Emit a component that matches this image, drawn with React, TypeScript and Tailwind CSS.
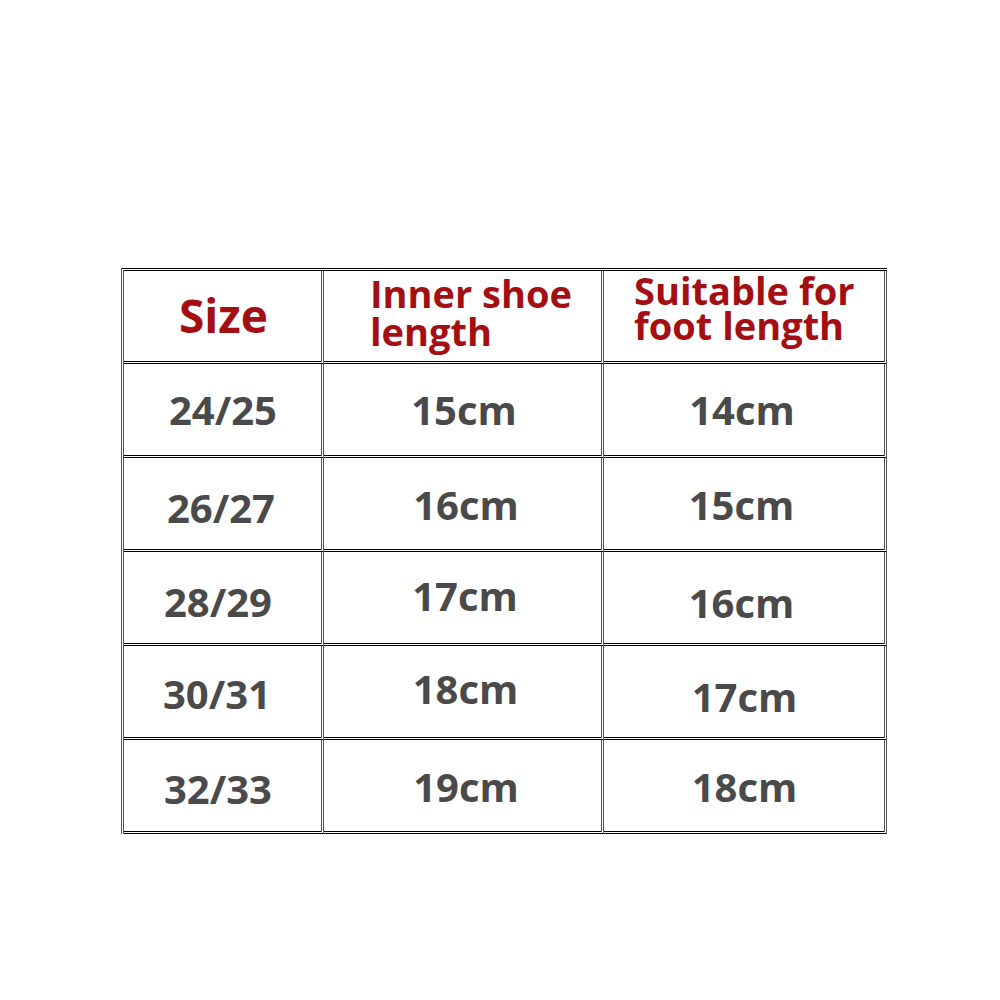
const rows = [
  {
    cells: [
      { text: "24/25", cls: "pl-[1px] pt-[0px]" },
      { text: "15cm", cls: "pl-[3px] pt-[0px]" },
      { text: "14cm", cls: "pr-[4px] pt-[0px]" },
    ],
  },
  {
    cells: [
      { text: "26/27", cls: "pr-[3px] pt-[8px]" },
      { text: "16cm", cls: "pl-[7px] pt-[2px]" },
      { text: "15cm", cls: "pr-[5px] pt-[2px]" },
    ],
  },
  {
    cells: [
      { text: "28/29", cls: "pr-[9px] pt-[8px]" },
      { text: "17cm", cls: "pl-[5px] pb-[4px]" },
      { text: "16cm", cls: "pr-[5px] pt-[10px]" },
    ],
  },
  {
    cells: [
      { text: "30/31", cls: "pr-[11px] pt-[4px]" },
      { text: "18cm", cls: "pl-[6px] pb-[6px]" },
      { text: "17cm", cls: "pl-[1px] pt-[10px]" },
    ],
  },
  {
    cells: [
      { text: "32/33", cls: "pr-[9px] pt-[6px]" },
      { text: "19cm", cls: "pl-[7px] pt-[2px]" },
      { text: "18cm", cls: "pl-[1px] pt-[2px]" },
    ],
  },
];

export default function App() {
  return (
    <div
      className="w-[1000px] h-[1000px] bg-white pt-[268px] pl-[121px]"
      style={{ fontFamily: '"Open Sans", "Noto Sans", sans-serif' }}
    >
      <div className="grid grid-cols-[200px_280px_283px] w-[766px] border-t-[3px] border-l-[3px] border-double border-t-black border-l-[#555]">
        {/* Header */}
        <div className="h-[93px] flex items-center justify-center border-b-[3px] border-r-[3px] border-double border-b-black border-r-[#555]">
          <span className="text-[46px] font-bold text-[#a30f13] leading-none pl-[2px] pb-[2px]">
            Size
          </span>
        </div>
        <div className="h-[93px] pl-[46px] pt-[3px] border-b-[3px] border-r-[3px] border-double border-b-black border-r-[#555]">
          <div className="text-[38px] font-bold text-[#a30f13] leading-[38px]">
            Inner shoe
            <br />
            length
          </div>
        </div>
        <div className="h-[93px] pl-[30px] pt-[2px] border-b-[3px] border-r-[3px] border-double border-b-black border-r-[#555]">
          <div className="text-[38px] font-bold text-[#a30f13] leading-[35px]">
            Suitable for
            <br />
            foot length
          </div>
        </div>

        {/* Body */}
        {rows.map((row, i) =>
          row.cells.map((cell, j) => (
            <div
              key={`${i}-${j}`}
              className={`h-[94px] flex items-center justify-center border-b-[3px] border-r-[3px] border-double border-b-black border-r-[#555] ${cell.cls}`}
            >
              <span className="text-[40px] font-bold text-[#4a4a4a] leading-none">
                {cell.text}
              </span>
            </div>
          ))
        )}
      </div>
    </div>
  );
}
